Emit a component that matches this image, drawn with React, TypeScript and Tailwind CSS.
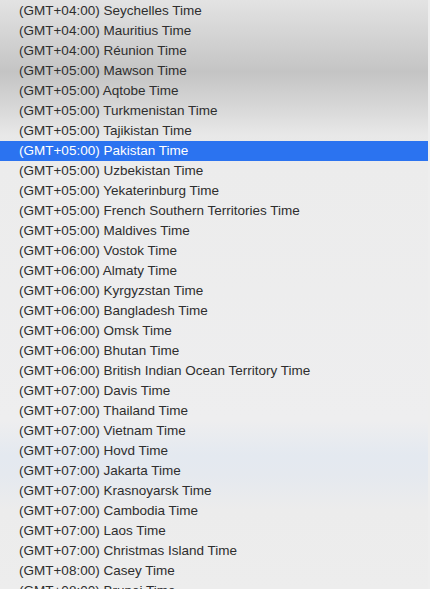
const zones = [
  "(GMT+04:00) Seychelles Time",
  "(GMT+04:00) Mauritius Time",
  "(GMT+04:00) Réunion Time",
  "(GMT+05:00) Mawson Time",
  "(GMT+05:00) Aqtobe Time",
  "(GMT+05:00) Turkmenistan Time",
  "(GMT+05:00) Tajikistan Time",
  "(GMT+05:00) Pakistan Time",
  "(GMT+05:00) Uzbekistan Time",
  "(GMT+05:00) Yekaterinburg Time",
  "(GMT+05:00) French Southern Territories Time",
  "(GMT+05:00) Maldives Time",
  "(GMT+06:00) Vostok Time",
  "(GMT+06:00) Almaty Time",
  "(GMT+06:00) Kyrgyzstan Time",
  "(GMT+06:00) Bangladesh Time",
  "(GMT+06:00) Omsk Time",
  "(GMT+06:00) Bhutan Time",
  "(GMT+06:00) British Indian Ocean Territory Time",
  "(GMT+07:00) Davis Time",
  "(GMT+07:00) Thailand Time",
  "(GMT+07:00) Vietnam Time",
  "(GMT+07:00) Hovd Time",
  "(GMT+07:00) Jakarta Time",
  "(GMT+07:00) Krasnoyarsk Time",
  "(GMT+07:00) Cambodia Time",
  "(GMT+07:00) Laos Time",
  "(GMT+07:00) Christmas Island Time",
  "(GMT+08:00) Casey Time",
  "(GMT+08:00) Brunei Time",
];

const selected = "(GMT+05:00) Pakistan Time";

export default function App() {
  return (
    <div className="h-[589px] w-[430px] overflow-hidden border-r-2 border-[#eeeeee] bg-[linear-gradient(180deg,#e3e3e3_0px,#d2d2d2_40px,#c4c4c4_72px,#d6d6d6_105px,#e8e8e8_135px,#ececec_165px,#eeeeef_420px,#e4e9f0_455px,#e5e9ef_475px,#ececec_510px,#ededed_589px)] font-['Liberation_Sans',Arial,sans-serif]">
      <ul className="flex flex-col pt-px">
        {zones.map((z) => (
          <li
            key={z}
            className={
              z === selected
                ? "h-5 flex items-center pl-[19px] text-[13.5px] leading-none text-white bg-[#2b73f0]"
                : "h-5 flex items-center pl-[19px] text-[13.5px] leading-none text-[#2e2e2e]"
            }
          >
            {z}
          </li>
        ))}
      </ul>
    </div>
  );
}
